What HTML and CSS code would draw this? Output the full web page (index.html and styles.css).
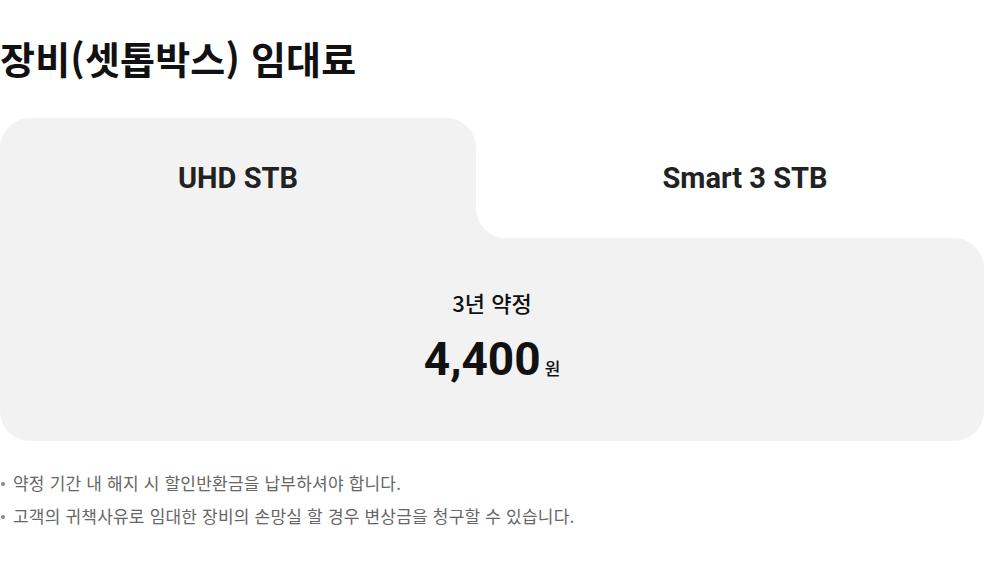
FILE: index.html
```html
<!DOCTYPE html>
<html lang="ko">
<head>
<meta charset="utf-8">
<title>장비(셋톱박스) 임대료</title>
<link rel="stylesheet" href="styles.css">
</head>
<body>
<section class="rental">
  <h1 class="title">장비(셋톱박스) 임대료</h1>
  <div class="tabs">
    <div class="tab tab-active">UHD STB</div>
    <div class="tab-wrap">
      <div class="tab tab-idle">Smart 3 STB</div>
    </div>
  </div>
  <div class="panel">
    <div class="term">3년 약정</div>
    <div class="price"><span class="amount">4,400</span><span class="unit">원</span></div>
  </div>
  <ul class="notes">
    <li>약정 기간 내 해지 시 할인반환금을 납부하셔야 합니다.</li>
    <li>고객의 귀책사유로 임대한 장비의 손망실 할 경우 변상금을 청구할 수 있습니다.</li>
  </ul>
</section>
</body>
</html>
```

FILE: styles.css
```css
html, body {
  margin: 0;
  padding: 0;
  background: #fff;
}

body {
  font-family: "Noto Sans CJK KR", "Noto Sans", sans-serif;
  color: #111;
}

.rental {
  width: 984px;
}

.title {
  margin: 0;
  padding-top: 30px;
  font-size: 38px;
  line-height: 56px;
  font-weight: 700;
  color: #111;
  letter-spacing: 0.2px;
}

.tabs {
  margin-top: 32px;
  display: flex;
  height: 120px;
}

.tab {
  display: flex;
  align-items: center;
  justify-content: center;
  font-family: Roboto, "Noto Sans CJK KR", sans-serif;
  font-weight: 700;
  font-size: 29px;
  color: #222;
}

.tab-active {
  width: 476px;
  background: #f2f2f2;
  border-radius: 30px 30px 0 0;
}

.tab-wrap {
  flex: 1;
  display: flex;
  background: linear-gradient(#f2f2f2, #f2f2f2) left bottom / 30px 30px no-repeat;
}

.tab-idle {
  flex: 1;
  background: #fff;
  border-bottom-left-radius: 30px;
  padding-left: 30px;
}

.panel {
  height: 203px;
  background: #f2f2f2;
  border-radius: 0 30px 30px 30px;
  display: flex;
  flex-direction: column;
  align-items: center;
  box-sizing: border-box;
  padding-top: 48px;
}

.term {
  font-size: 22px;
  line-height: 32px;
  font-weight: 500;
  color: #111;
}

.price {
  margin-top: 14px;
  display: flex;
  align-items: baseline;
}

.amount {
  font-family: Roboto, sans-serif;
  font-weight: 700;
  font-size: 46px;
  line-height: 54px;
  color: #111;
}

.unit {
  margin-left: 4px;
  font-size: 17px;
  font-weight: 500;
  color: #111;
}

.notes {
  list-style: none;
  margin: 25px 0 0;
  padding: 0;
}

.notes li {
  position: relative;
  padding-left: 13px;
  font-size: 17px;
  line-height: 33px;
  letter-spacing: 0.2px;
  color: #666;
}

.notes li::before {
  content: "";
  position: absolute;
  left: 1px;
  top: 16px;
  width: 4px;
  height: 4px;
  border-radius: 50%;
  background: #888;
}
```
